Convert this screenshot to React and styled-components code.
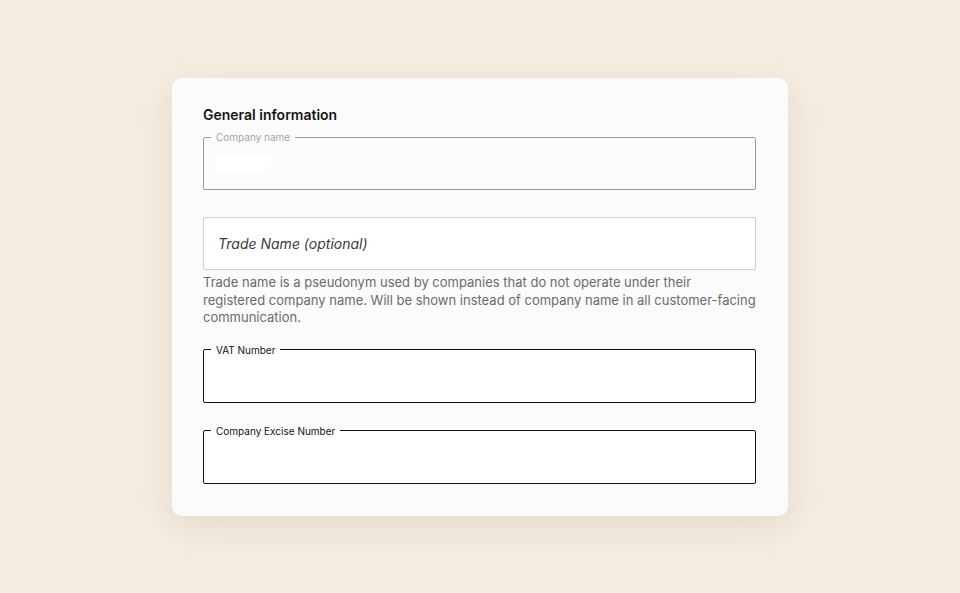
import React from 'react';
import styled, { createGlobalStyle } from 'styled-components';

const GlobalStyle = createGlobalStyle`
  html, body {
    margin: 0;
    padding: 0;
    background: #f5ede1;
    font-family: Inter, "Noto Sans", sans-serif;
  }
  * { box-sizing: border-box; }
`;

const Page = styled.div`
  min-height: 100vh;
  display: flex;
  align-items: flex-start;
  justify-content: center;
  padding-top: 78px;
`;

const Card = styled.div`
  width: 616px;
  background: #fbfbfb;
  border-radius: 10px;
  box-shadow: 0 10px 40px rgba(120, 100, 70, 0.14);
  padding: 27px 32px 32px 31px;
  display: flex;
  flex-direction: column;
`;

const Title = styled.h2`
  margin: 0 0 6px;
  font-size: 14px;
  line-height: 20px;
  font-weight: 600;
  color: #161616;
`;

const Outlined = styled.fieldset`
  display: block;
  margin: ${(p) => p.$top || 0}px 0 0;
  padding: 0 14px;
  height: 59px;
  border: 1px solid ${(p) => (p.$muted ? '#9a9a9a' : '#111')};
  border-radius: 2px;
  background: ${(p) => (p.$muted ? '#fcfcfc' : '#fff')};
`;

const Legend = styled.legend`
  margin-left: -7px;
  padding: 0 5px;
  font-size: 10px;
  line-height: 12px;
  color: ${(p) => (p.$muted ? '#a3a3a3' : '#111')};
`;

const Redacted = styled.span`
  display: block;
  width: 56px;
  height: 14px;
  margin: 13px 0 0 -3px;
  background: #fff;
`;

const PlainInput = styled.div`
  margin-top: 27px;
  height: 53px;
  border: 1px solid #cfcfcf;
  border-radius: 2px;
  background: #fff;
  padding: 0 14px;
  display: flex;
  align-items: center;
  font-size: 14px;
  font-style: italic;
  color: #3a3a3a;
`;

const Helper = styled.p`
  margin: 4px -8px 0 0;
  font-size: 13px;
  line-height: 17.5px;
  color: #6b6b6b;
`;

export default function App() {
  return (
    <>
      <GlobalStyle />
      <Page>
        <Card>
          <Title>General information</Title>
          <Outlined $muted>
            <Legend $muted>Company name</Legend>
            <Redacted />
          </Outlined>
          <PlainInput>Trade Name (optional)</PlainInput>
          <Helper>
            Trade name is a pseudonym used by companies that do not operate under their
            <br />
            registered company name. Will be shown instead of company name in all
            customer-facing communication.
          </Helper>
          <Outlined $top={17}>
            <Legend>VAT Number</Legend>
          </Outlined>
          <Outlined $top={22}>
            <Legend>Company Excise Number</Legend>
          </Outlined>
        </Card>
      </Page>
    </>
  );
}
